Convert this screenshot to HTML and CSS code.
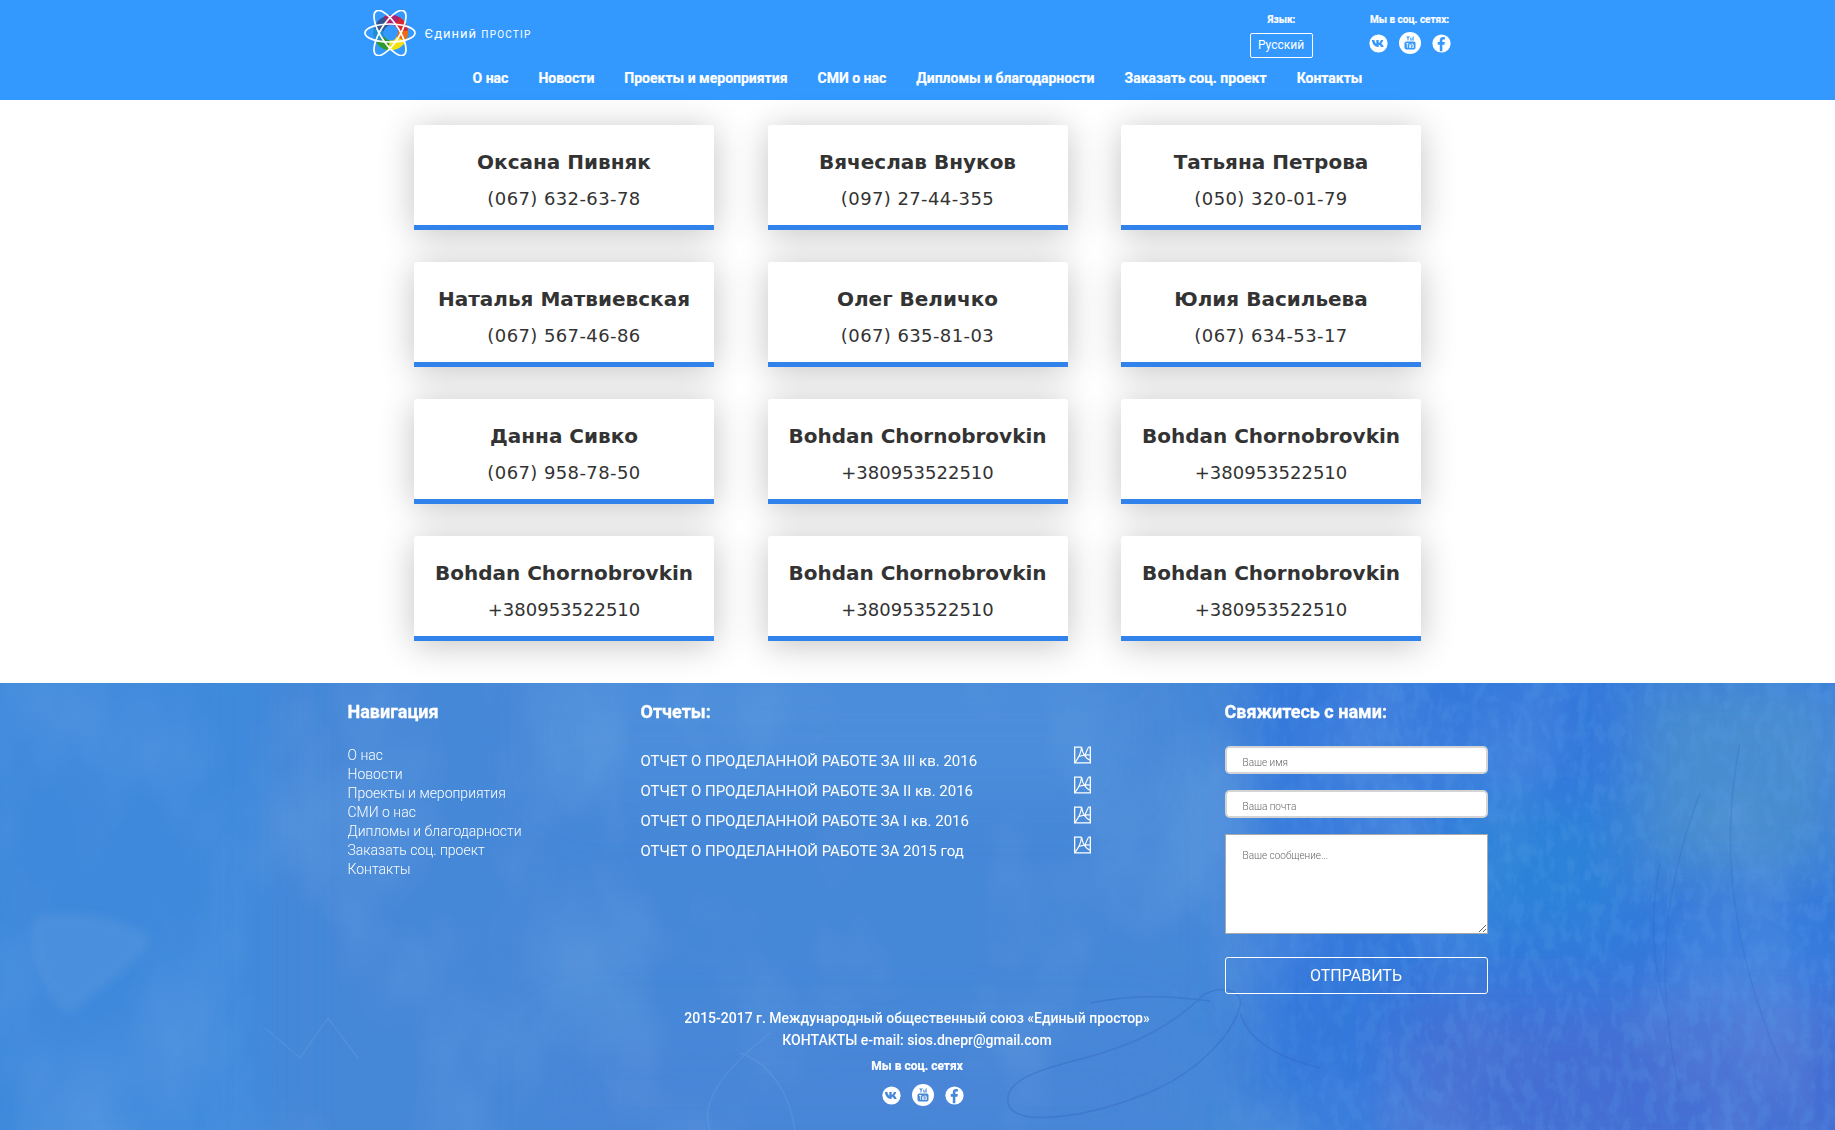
FILE: index.html
```html
<!DOCTYPE html>
<html lang="en">
<head>
    <meta charset="UTF-8">
    <meta name="viewport" content="width=device-width, initial-scale=1.0">
    <title>Единый простор</title>
    <link rel="stylesheet" href="styles.css">
</head>
<body>
  <svg class="icon-defs" width="0" height="0">
    <symbol id="i-vk" viewBox="0 0 20 20">
      <circle cx="10" cy="10" r="9.6" fill="#fff"/>
      <path fill="currentColor" d="M3 6.400h2.700c.1 1.700 1.200 3.600 2 3.900V6.400h2.500v3.200c.8-.1 1.800-1.500 2.300-3.200H15c-.3 1.700-1.400 3-2.100 3.700.8.500 2 1.600 2.600 3.600h-2.800c-.4-1.300-1.400-2.300-2.500-2.400v2.400H9.600C6 13.700 3.500 10.800 3 6.400z"/>
    </symbol>
    <symbol id="i-yt" viewBox="0 0 22 22">
      <circle cx="11" cy="11" r="11" fill="#fff"/>
      <g fill="currentColor">
        <path d="M7.300 4h1l.7 1.500.7-1.500h1l-1.200 2.400v2h-1V6.400z"/>
        <path d="M11.200 5.400h.9v2.200h.6V5.400h.9v3h-2.400zM13.800 4.200h.9v4.200h-.9z" opacity=".85"/>
        <rect x="5.500" y="9.500" width="11" height="8" rx="1.800"/>
      </g>
      <path fill="#fff" d="M7 11h2.600v.8h-.9v4h-.8v-4H7zM10 12.200h.7v2.800h.6v-2.800h.7v3.600h-2zM12.700 11h.7v1.400h1.400v3.400h-2.100zM13.400 13.100v2h.7v-2z"/>
    </symbol>
    <symbol id="i-fb" viewBox="0 0 20 20">
      <circle cx="10" cy="10" r="9.600" fill="#fff"/>
      <path fill="currentColor" d="M10.900 18.200v-7h2.200l.4-2.700h-2.600V7c0-.8.3-1.300 1.300-1.300h1.400V3.300c-.3 0-1.100-.1-2-.1-2 0-3.400 1.200-3.400 3.500v1.800H6v2.700h2.200v7z"/>
    </symbol>
    <symbol id="i-pdf" viewBox="0 0 18 18">
      <path fill="none" stroke="#fff" stroke-width="1.400" d="M8 .7H.7v16.600h16.600V.7h-2"/>
      <path fill="none" stroke="#fff" stroke-width="1.200" d="M8 .7C7.500 6 5 12 1 17M8 .7c1 6 4 12 9.300 14M5 10.500c4-1.500 8-2 12.300-1.500M15.300.7c-1 2.500-2.300 5-3.500 8"/>
    </symbol>
  </svg>

  <header class="site-header">
    <div class="header-top">
      <a class="logo" href="#">
        <svg class="logo-mark" viewBox="0 0 52 46" width="52" height="46">
          <g fill="none" stroke-width="10" transform="translate(-1 -1)">
            <path stroke="#34558f" d="M16 21a12 12 0 0 1 8-9"/>
            <path stroke="#b0226e" d="M23 12a12 12 0 0 1 12 1"/>
            <path stroke="#d8262c" d="M34 12.500a12 12 0 0 1 6 11"/>
            <path stroke="#ee6b12" d="M40 22a12 12 0 0 1-3 9"/>
            <path stroke="#f2e010" d="M38 30a12 12 0 0 1-14 6"/>
            <path stroke="#2f9a2c" d="M26 36.500a12 12 0 0 1-9-7"/>
            <path stroke="#1e8fd0" d="M17.500 30.500a12 12 0 0 1-2-10"/>
          </g>
          <g fill="none" stroke="#fff" stroke-width="1.700">
            <ellipse cx="26" cy="23" rx="25" ry="9"/>
            <ellipse cx="26" cy="23" rx="26" ry="9.500" transform="rotate(58 26 23)"/>
            <ellipse cx="26" cy="23" rx="26" ry="9.500" transform="rotate(-58 26 23)"/>
          </g>
        </svg>
        <span class="logo-text">Єдиний <small>простір</small></span>
      </a>
      <div class="lang-block">
        <span class="top-label">Язык:</span>
        <button class="lang-btn">Русский</button>
      </div>
      <div class="social-block">
        <span class="top-label">Мы в соц. сетях:</span>
        <div class="social-icons">
          <svg class="soc soc-sm head-soc"><use href="#i-vk"/></svg>
          <svg class="soc soc-lg head-soc"><use href="#i-yt"/></svg>
          <svg class="soc soc-sm head-soc"><use href="#i-fb"/></svg>
        </div>
      </div>
    </div>
    <nav class="main-nav">
      <a href="#">О нас</a>
      <a href="#">Новости</a>
      <a href="#">Проекты и мероприятия</a>
      <a href="#">СМИ о нас</a>
      <a href="#">Дипломы и благодарности</a>
      <a href="#">Заказать соц. проект</a>
      <a href="#">Контакты</a>
    </nav>
  </header>

  <main class="contacts">
    <div class="contact-card"><h3>Оксана Пивняк</h3><p class="phone-local">(067) 632-63-78</p></div>
    <div class="contact-card"><h3>Вячеслав Внуков</h3><p class="phone-local">(097) 27-44-355</p></div>
    <div class="contact-card"><h3>Татьяна Петрова</h3><p class="phone-local">(050) 320-01-79</p></div>
    <div class="contact-card"><h3>Наталья Матвиевская</h3><p class="phone-local">(067) 567-46-86</p></div>
    <div class="contact-card"><h3>Олег Величко</h3><p class="phone-local">(067) 635-81-03</p></div>
    <div class="contact-card"><h3>Юлия Васильева</h3><p class="phone-local">(067) 634-53-17</p></div>
    <div class="contact-card"><h3>Данна Сивко</h3><p class="phone-local">(067) 958-78-50</p></div>
    <div class="contact-card"><h3>Bohdan Chornobrovkin</h3><p>+380953522510</p></div>
    <div class="contact-card"><h3>Bohdan Chornobrovkin</h3><p>+380953522510</p></div>
    <div class="contact-card"><h3>Bohdan Chornobrovkin</h3><p>+380953522510</p></div>
    <div class="contact-card"><h3>Bohdan Chornobrovkin</h3><p>+380953522510</p></div>
    <div class="contact-card"><h3>Bohdan Chornobrovkin</h3><p>+380953522510</p></div>
  </main>

  <footer class="site-footer">
    <!-- painted background -->
    <svg class="footer-paint" viewBox="0 0 1835 447" preserveAspectRatio="none">
      <defs>
        <filter id="soft" x="-20%" y="-20%" width="140%" height="140%"><feGaussianBlur stdDeviation="30"/></filter>
        <filter id="softer"><feGaussianBlur stdDeviation="5"/></filter>
        <filter id="streaks" x="0" y="0" width="100%" height="100%">
          <feTurbulence type="fractalNoise" baseFrequency=".006 .004" numOctaves="4" seed="7"/>
          <feColorMatrix values="0 0 0 0 .75  0 0 0 0 .87  0 0 0 0 1  2.800 0 0 0 -1.250"/>
        </filter>
        <filter id="grain" x="0" y="0" width="100%" height="100%">
          <feTurbulence type="fractalNoise" baseFrequency=".09 .05" numOctaves="4" seed="3"/>
          <feColorMatrix values="0 0 0 0 .1  0 0 0 0 .36  0 0 0 0 .82  4 0 0 0 -1.700"/>
        </filter>
        <linearGradient id="fadeRight" x1="0" x2="1" y1="0" y2="0">
          <stop offset="0" stop-color="#fff" stop-opacity="0"/>
          <stop offset=".4" stop-color="#fff"/>
        </linearGradient>
        <mask id="rightMask"><rect x="1100" width="735" height="448" fill="url(#fadeRight)"/></mask>
      </defs>
      <g filter="url(#soft)">
        <path fill="#2f74dc" d="M1250 -60h650v560H1400l-150-90z" opacity=".8"/>
        <path fill="#3a8ade" d="M-60 -60h330v560H-60z" opacity=".7"/>
        <path fill="#4a6cd0" d="M1400 320h500v180h-500z" opacity=".75"/>
        <path fill="#4f94cc" d="M1640 0h195v190h-195z" opacity=".8"/>
        <path fill="#2c84d8" d="M1450 120h170v130h-170z" opacity=".9"/>
        <path fill="#5092de" d="M560 -20h560v130H560z" opacity=".6"/>
        <path fill="#4a84d8" d="M560 350h600v120H560z" opacity=".5"/>
      </g>
      <rect width="1835" height="447" filter="url(#streaks)" opacity=".1"/>
      <g mask="url(#rightMask)">
        <rect x="1100" width="735" height="447" filter="url(#grain)" opacity=".2"/>
      </g>
      <g filter="url(#softer)">
        <path fill="#7aa8e2" d="M38 235c20-12 100 2 110 20 0 20-50 50-75 75-20 5-55-80-35-95z" opacity=".2"/>
      </g>
      <g fill="none" stroke="#3468c0" stroke-width="1.500" opacity=".4">
        <path d="M1010 425c-12-25 25-38 75-50 45-12 85-30 115-60 15-14 45-10 40 8-8 30-45 70-100 90-50 20-115 30-130 12z"/>
        <path d="M1090 320c40-8 75-8 120-2M1240 330c10 30 40 45 80 55"/>
        <path d="M1700 110c-30 80-50 170-20 300M1740 60c-20 100-10 200 40 320M1660 180c-10 50-10 100 10 160" opacity=".7"/>
      </g>
      <g fill="none" stroke="#8ab6e8" stroke-width="1.500" opacity=".18">
        <path d="M740 370c30 10 50 40 55 78M770 350c-50 40-70 70-60 98M265 345l35 30 28-40 30 40"/>
      </g>
    </svg>

    <div class="footer-main">
      <div class="footer-nav">
        <h4>Навигация</h4>
        <a href="#">О нас</a>
        <a href="#">Новости</a>
        <a href="#">Проекты и мероприятия</a>
        <a href="#">СМИ о нас</a>
        <a href="#">Дипломы и благодарности</a>
        <a href="#">Заказать соц. проект</a>
        <a href="#">Контакты</a>
      </div>
      <div class="footer-reports">
        <h4>Отчеты:</h4>
        <div class="report"><a href="#">ОТЧЕТ О ПРОДЕЛАННОЙ РАБОТЕ ЗА III кв. 2016</a><svg class="pdf"><use href="#i-pdf"/></svg></div>
        <div class="report"><a href="#">ОТЧЕТ О ПРОДЕЛАННОЙ РАБОТЕ ЗА II кв. 2016</a><svg class="pdf"><use href="#i-pdf"/></svg></div>
        <div class="report"><a href="#">ОТЧЕТ О ПРОДЕЛАННОЙ РАБОТЕ ЗА I кв. 2016</a><svg class="pdf"><use href="#i-pdf"/></svg></div>
        <div class="report"><a href="#">ОТЧЕТ О ПРОДЕЛАННОЙ РАБОТЕ ЗА 2015 год</a><svg class="pdf"><use href="#i-pdf"/></svg></div>
      </div>
      <form class="footer-form">
        <h4>Свяжитесь с нами:</h4>
        <input type="text" placeholder="Ваше имя">
        <input type="text" placeholder="Ваша почта">
        <textarea placeholder="Ваше сообщение..."></textarea>
        <button type="button">ОТПРАВИТЬ</button>
      </form>
    </div>
    <div class="footer-bottom">
      <p>2015-2017 г. Международный общественный союз «Единый простор»</p>
      <p>КОНТАКТЫ e-mail: sios.dnepr@gmail.com</p>
      <span class="top-label bottom-label">Мы в соц. сетях</span>
      <div class="social-icons">
        <svg class="soc soc-sm foot-soc"><use href="#i-vk"/></svg>
        <svg class="soc soc-lg foot-soc"><use href="#i-yt"/></svg>
        <svg class="soc soc-sm foot-soc"><use href="#i-fb"/></svg>
      </div>
    </div>
  </footer>
</body>
</html>
```

FILE: styles.css
```css
* {
    margin: 0;
    padding: 0;
    box-sizing: border-box;
}

body {
    font-family: Roboto, "Liberation Sans", sans-serif;
    background-color: #fff;
    color: #fff;
}

a {
    color: inherit;
    text-decoration: none;
}

.icon-defs {
    position: absolute;
}

/* Header */
.site-header {
    height: 100px;
    background-color: #3399ff;
}

.header-top {
    width: 1170px;
    height: 62px;
    margin: 0 auto;
    padding-left: 31px;
    display: flex;
}

.logo {
    display: flex;
    align-items: center;
    height: 46px;
    margin-top: 10px;
    margin-right: 715px;
}

.logo-mark {
    flex: none;
}

.logo-text {
    margin-left: 9px;
    width: 110px;
    font-size: 13px;
    font-weight: 400;
    letter-spacing: 1px;
    white-space: nowrap;
}

.logo-text small {
    font-size: 10px;
    letter-spacing: 1.200px;
    text-transform: uppercase;
}

.top-label {
    display: block;
    font-size: 10px;
    font-weight: 700;
    line-height: 12px;
    text-align: center;
    -webkit-text-stroke: 0.2px #fff;
}

.lang-block {
    width: 64px;
    margin-top: 14px;
}

.lang-btn {
    width: 63px;
    height: 25px;
    margin-top: 7px;
    padding-bottom: 2px;
    background: transparent;
    border: 1px solid #fff;
    border-radius: 2px;
    color: #fff;
    font-family: Roboto, sans-serif;
    font-size: 12px;
    font-weight: 400;
}

.social-block {
    width: 84px;
    margin-left: 54px;
    margin-top: 14px;
}

.social-icons {
    display: flex;
    align-items: center;
    justify-content: center;
    gap: 11px;
    margin-top: 6px;
}

.soc {
    display: block;
}

.soc-sm {
    width: 19px;
    height: 19px;
}

.soc-lg {
    width: 22px;
    height: 22px;
}

.head-soc {
    color: #3399ff;
}

.foot-soc {
    color: #4688d8;
}

.main-nav {
    display: flex;
    justify-content: center;
    gap: 30px;
    font-size: 14px;
    font-weight: 700;
    line-height: 32px;
    -webkit-text-stroke: 0.2px #fff;
}

/* Contact cards */
.contacts {
    width: 1007px;
    margin: 0 auto;
    padding: 25px 0 42px;
    display: grid;
    grid-template-columns: repeat(3, 300px);
    justify-content: space-between;
    row-gap: 32px;
}

.contact-card {
    height: 105px;
    padding-top: 24px;
    background: #fff;
    border-bottom: 5px solid #3182ea;
    border-radius: 3px 3px 0 0;
    box-shadow: 0 4px 35px rgba(0, 0, 0, 0.24);
    font-family: "DejaVu Sans", Verdana, sans-serif;
    text-align: center;
    color: #333;
}

.contact-card h3 {
    font-size: 20px;
    font-weight: 700;
    line-height: 26px;
}

.contact-card p {
    margin-top: 13px;
    font-size: 18px;
    line-height: 22px;
}

.contact-card .phone-local {
    letter-spacing: 0.4px;
}

/* Footer */
.site-footer {
    height: 447px;
    position: relative;
    overflow: hidden;
    background-color: #4688d8;
}

.footer-paint {
    position: absolute;
    left: 0;
    top: 0;
    width: 100%;
    height: 100%;
}

.footer-main {
    position: relative;
    width: 1142px;
    height: 310px;
    margin: 0 auto;
    padding-top: 18px;
    display: flex;
}

.site-footer h4 {
    font-size: 18px;
    font-weight: 700;
    line-height: 22px;
    -webkit-text-stroke: 0.3px #fff;
}

.footer-nav {
    flex: none;
    width: 294px;
    padding-left: 1px;
}

.footer-nav h4 {
    margin-bottom: 23px;
}

.footer-nav a {
    display: block;
    font-size: 14px;
    font-weight: 300;
    line-height: 19px;
}

.footer-reports {
    flex: none;
    width: 584px;
}

.footer-reports h4 {
    margin-bottom: 23px;
}

.report {
    width: 450px;
    height: 30px;
    display: flex;
    justify-content: space-between;
    font-size: 15px;
    line-height: 30px;
}

.pdf {
    width: 17px;
    height: 18px;
}

.footer-form {
    flex: none;
    width: 263px;
}

.footer-form h4 {
    margin-bottom: 23px;
}

.footer-form input,
.footer-form textarea {
    display: block;
    width: 100%;
    background: #fff;
    font-family: Roboto, sans-serif;
    font-size: 10px;
    font-weight: 300;
    color: #555;
}

.footer-form input::placeholder,
.footer-form textarea::placeholder {
    color: #666;
}

.footer-form input {
    height: 28px;
    margin-bottom: 16px;
    padding: 4px 16px 0;
    border: 2px solid #d4d4d4;
    border-radius: 5px;
}

.footer-form textarea {
    height: 100px;
    padding: 15px 17px;
    border: 1px solid #a9a9a9;
}

.footer-form button {
    display: block;
    width: 100%;
    height: 37px;
    margin-top: 23px;
    background: transparent;
    border: 1px solid #fff;
    border-radius: 3px;
    color: #fff;
    font-family: Roboto, sans-serif;
    font-size: 16px;
}

.footer-bottom {
    position: relative;
    text-align: center;
    padding-top: 14px;
    padding-right: 1px;
}

.footer-bottom p {
    font-size: 14px;
    font-weight: 500;
    line-height: 22px;
}

.bottom-label {
    margin-top: 9px;
    font-size: 12px;
    line-height: 13px;
}

.footer-bottom .social-icons {
    margin-top: 11px;
    padding-left: 12px;
}
```
